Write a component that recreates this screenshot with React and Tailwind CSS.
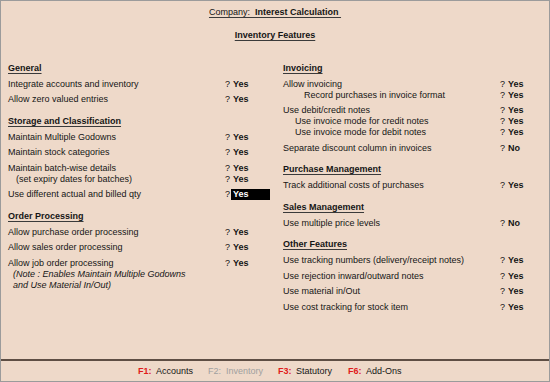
import React from 'react';

const left = [
    { h: 'General', first: true },
    { rows: [{ l: 'Integrate accounts and inventory', v: 'Yes' }] },
    { rows: [{ l: 'Allow zero valued entries', v: 'Yes' }] },
    { h: 'Storage and Classification' },
    { rows: [{ l: 'Maintain Multiple Godowns', v: 'Yes' }] },
    { rows: [{ l: 'Maintain stock categories', v: 'Yes' }] },
    {
        rows: [
            { l: 'Maintain batch-wise details', v: 'Yes' },
            { l: '(set expiry dates for batches)', v: 'Yes', ind: 'pl-[8px]' },
        ],
    },
    { rows: [{ l: 'Use different actual and billed qty', v: 'Yes', hl: true }] },
    { h: 'Order Processing' },
    { rows: [{ l: 'Allow purchase order processing', v: 'Yes' }] },
    { rows: [{ l: 'Allow sales order processing', v: 'Yes' }] },
    {
        rows: [
            { l: 'Allow job order processing', v: 'Yes' },
            { l: '(Note : Enables Maintain Multiple Godowns', note: true },
            { l: 'and Use Material In/Out)', note: true },
        ],
    },
];

const right = [
    { h: 'Invoicing', first: true },
    {
        rows: [
            { l: 'Allow invoicing', v: 'Yes' },
            { l: 'Record purchases in invoice format', v: 'Yes', ind: 'pl-[21px]' },
        ],
    },
    {
        rows: [
            { l: 'Use debit/credit notes', v: 'Yes' },
            { l: 'Use invoice mode for credit notes', v: 'Yes', ind: 'pl-[12px]' },
            { l: 'Use invoice mode for debit notes', v: 'Yes', ind: 'pl-[12px]' },
        ],
    },
    { rows: [{ l: 'Separate discount column in invoices', v: 'No' }] },
    { h: 'Purchase Management' },
    { rows: [{ l: 'Track additional costs of purchases', v: 'Yes' }] },
    { h: 'Sales Management' },
    { rows: [{ l: 'Use multiple price levels', v: 'No' }] },
    { h: 'Other Features' },
    { rows: [{ l: 'Use tracking numbers (delivery/receipt notes)', v: 'Yes' }] },
    { rows: [{ l: 'Use rejection inward/outward notes', v: 'Yes' }] },
    { rows: [{ l: 'Use material in/Out', v: 'Yes' }] },
    { rows: [{ l: 'Use cost tracking for stock item', v: 'Yes' }] },
];

const Row = ({ row }) => {
    if (row.note) {
        return <div className="pl-[5px] italic leading-[11px] whitespace-nowrap">{row.l}</div>;
    }
    return (
        <div className="flex leading-[11px]">
            <span className={`w-[217px] shrink-0 whitespace-nowrap ${row.ind || ''}`}>{row.l}</span>
            <span className="w-[6px] shrink-0">?</span>
            <span className={`w-[39px] shrink-0 pl-[2px] font-bold ${row.hl ? 'bg-black text-white' : ''}`}>
                {row.v}
            </span>
        </div>
    );
};

const Column = ({ items }) => (
    <div className="w-[262px] flex flex-col">
        {items.map((it, i) =>
            it.h ? (
                <div
                    key={i}
                    className={`${it.first ? '' : 'mt-[10.5px]'} mb-[0.5px] leading-[11px] font-bold underline underline-offset-[2px] decoration-[#3a3a3a]`}
                >
                    {it.h}
                </div>
            ) : (
                <div key={i} className="mt-[4.5px]">
                    {it.rows.map((r, j) => (
                        <Row key={j} row={r} />
                    ))}
                </div>
            )
        )}
    </div>
);

const keys = [
    { k: 'F1:', l: 'Accounts' },
    { k: 'F2:', l: 'Inventory', off: true },
    { k: 'F3:', l: 'Statutory' },
    { k: 'F6:', l: 'Add-Ons' },
];

export default function App() {
    return (
        <div className="w-[550px] h-[382px] border border-[#9b9b9b] bg-[#eed9c9] text-[#151515] text-[9px] font-['Liberation_Sans',Arial,sans-serif] flex flex-col">
            <div className="flex-1 flex flex-col">
                <div className="pt-[5.5px] flex flex-col items-center">
                    <div className="leading-[11px] underline underline-offset-[2px] decoration-[#3a3a3a] whitespace-pre">
                        Company:  <span className="font-bold">Interest Calculation </span>
                    </div>
                    <div className="mt-[12px] leading-[11px] font-bold underline underline-offset-[2px] decoration-[#3a3a3a]">
                        Inventory Features
                    </div>
                </div>
                <div className="mt-[22px] pl-[7px] flex gap-[13px]">
                    <Column items={left} />
                    <Column items={right} />
                </div>
            </div>
            <div className="h-[22px] border-t-2 border-[#5e4e44] flex items-center justify-center">
                <div className="flex pl-[6px] pt-[1px]">
                    {keys.map((k) => (
                        <div key={k.k} className="w-[70px] flex leading-[11px]">
                            <span className={`w-[18px] font-bold ${k.off ? 'text-[#a0a0a0] font-normal' : 'text-[#e01b1b]'}`}>
                                {k.k}
                            </span>
                            <span className={k.off ? 'text-[#a0a0a0]' : ''}>{k.l}</span>
                        </div>
                    ))}
                </div>
            </div>
        </div>
    );
}
